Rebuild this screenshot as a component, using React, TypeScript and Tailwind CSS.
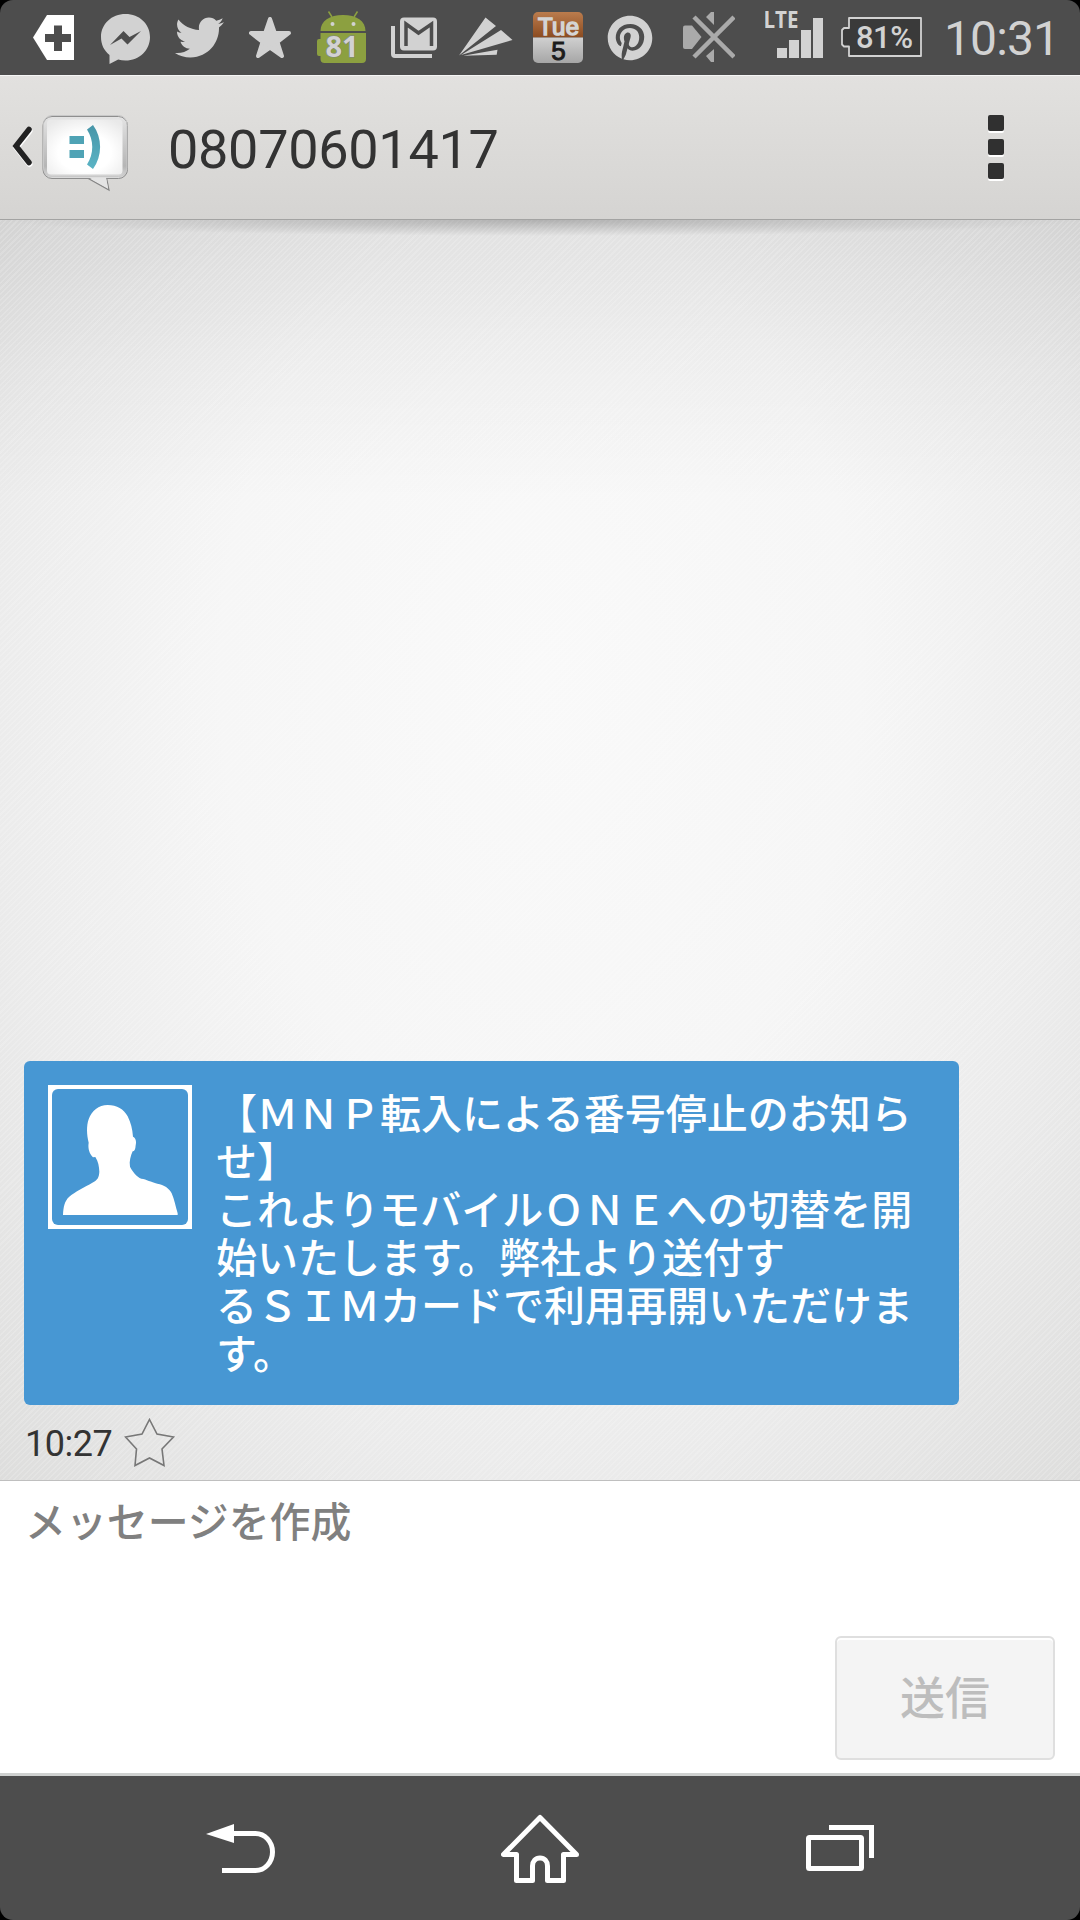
import { FaPinterest, FaTwitter } from "react-icons/fa";

const message = [
  "【ＭＮＰ転入による番号停止のお知ら",
  "せ】",
  "これよりモバイルＯＮＥへの切替を開",
  "始いたします。弊社より送付す",
  "るＳＩＭカードで利用再開いただけま",
  "す。",
];

export default function App() {
  return (
    <div className="flex h-[1920px] w-[1080px] flex-col overflow-hidden bg-black font-['Roboto','Noto_Sans_CJK_JP',sans-serif]">
      <StatusBar />
      <Header title="08070601417" />
      <Conversation />
      <Composer />
      <NavBar />
    </div>
  );
}

function StatusBar() {
  return (
    <div className="flex h-[75px] shrink-0 items-center rounded-t-[13px] bg-[#4d4d4d] text-[#d2d2d2]">
      {/* Back tag with plus */}
      <svg className="ml-[33px] shrink-0" width="41" height="75" viewBox="33 0 41 75">
        <path fill="#fff" d="M47 15h27v45H47L33 37.500z" />
        <path fill="#4d4d4d" d="M54 25.500h8V34h9v8h-9v9h-8v-9h-9v-8h9z" />
      </svg>

      {/* Messenger */}
      <svg className="ml-[27px] shrink-0" width="49" height="75" viewBox="101 0 49 75">
        <path
          fill="currentColor"
          d="M125.500 14c14 0 24.500 10 24.500 23s-10.500 23.500-24.500 23.500c-2.500 0-5-.3-7.300-1L109.500 64v-9c-5.500-4.500-8.500-10.500-8.500-18 0-13 10.500-23 24.500-23z"
        />
        <path fill="#4d4d4d" d="M110 45l13.500-14 6 6 11.500-6-13.500 13.500-6-6z" />
      </svg>

      <FaTwitter className="ml-[25px] h-[49px] w-[49px] shrink-0" />

      {/* Star */}
      <svg className="ml-[25px] shrink-0" width="42" height="75" viewBox="249 0 42 75">
        <path
          fill="currentColor"
          stroke="currentColor"
          strokeWidth="4"
          strokeLinejoin="round"
          d="M270 19l4.800 14H289l-11.500 9 4.500 14-12-8.500L258 56l4.500-14L251 33h14.200z"
        />
      </svg>

      {/* Android battery */}
      <svg className="ml-[26px] shrink-0" width="49" height="75" viewBox="317 0 49 75">
        <g fill="#8ca040">
          <path d="M320.500 31c0-10 9-16 22.500-16s22.500 6 22.500 16z" />
          <path d="M320.500 33h45.500v26a4 4 0 0 1-4 4h-37.500a4 4 0 0 1-4-4v-3h-1.500a2 2 0 0 1-2-2V41a2 2 0 0 1 2-2h1.500z" />
        </g>
        <path stroke="#8ca040" strokeWidth="1.500" d="M328.500 11.500l3.500 5.500M357.500 11.500l-3.500 5.500" />
        <circle cx="332.500" cy="24" r="2" fill="#d2d2d2" />
        <circle cx="353.500" cy="24" r="2" fill="#d2d2d2" />
        <text
          x="342"
          y="57"
          textAnchor="middle"
          className="fill-[#d2d2d2] stroke-[#7d8088] stroke-1 font-['Open_Sans',sans-serif] text-[29px] font-bold [paint-order:stroke]"
        >
          81
        </text>
      </svg>

      {/* Mail */}
      <svg className="ml-[25px] shrink-0" width="46" height="75" viewBox="391 0 46 75">
        <rect x="400" y="17.500" width="37" height="33" rx="4" fill="currentColor" />
        <path fill="none" stroke="#4d4d4d" strokeWidth="3.500" d="M406 46V24l12.500 9 13-9v22" />
        <path fill="currentColor" d="M391 26h4v28h37v4h-37a4 4 0 0 1-4-4z" />
      </svg>

      {/* Paper plane */}
      <svg className="ml-[22px] shrink-0" width="54" height="75" viewBox="459 0 54 75">
        <path fill="currentColor" d="M459 55.500L485.500 17.500 496 26zM461 55L501 30l11.500 10zM463 55.800l34.500-6-.8 5z" />
      </svg>

      {/* Calendar */}
      <svg className="ml-[20px] shrink-0" width="50" height="75" viewBox="533 0 50 75">
        <defs>
          <linearGradient id="calTop" x1="0" y1="0" x2="0" y2="1">
            <stop offset="0" stopColor="#bb7c4d" />
            <stop offset="1" stopColor="#8b4b20" />
          </linearGradient>
          <linearGradient id="calBottom" x1="0" y1="0" x2="0" y2="1">
            <stop offset="0" stopColor="#d0d0d0" />
            <stop offset="1" stopColor="#a6a6a6" />
          </linearGradient>
        </defs>
        <path fill="url(#calTop)" d="M533 37.500V17a5 5 0 0 1 5-5h40a5 5 0 0 1 5 5v20.500z" />
        <path fill="url(#calBottom)" d="M533 37.500h50V58a5 5 0 0 1-5 5h-40a5 5 0 0 1-5-5z" />
        <text
          x="558.500"
          y="35"
          textAnchor="middle"
          textLength="41"
          className="fill-[#d4d4d4] stroke-[#d4d4d4] stroke-[1.5px] font-['Liberation_Sans',sans-serif] text-[24px]"
        >
          Tue
        </text>
        <text
          x="558.500"
          y="59.500"
          textAnchor="middle"
          className="fill-[#1c1c1c] stroke-[#1c1c1c] stroke-1 font-['Liberation_Sans',sans-serif] text-[26px]"
        >
          5
        </text>
      </svg>

      <FaPinterest className="ml-[24px] h-[46px] w-[46px] shrink-0" />

      {/* Muted */}
      <svg className="ml-[30px] shrink-0" width="52" height="75" viewBox="683 0 52 75">
        <g fill="#aaa">
          <path d="M683 27.500a2 2 0 0 1 2-2h7L701.500 37 692 49h-7a2 2 0 0 1-2-2z" />
          <path d="M706 17l5-5h3v13zM706 56l5 6h3V49z" />
        </g>
        <path stroke="#aaa" strokeWidth="4.500" d="M694 17l40 40M734 17l-40 40" />
      </svg>

      {/* Signal */}
      <svg className="ml-[30px] shrink-0" width="58" height="75" viewBox="765 0 58 75">
        <text
          x="763.500"
          y="28"
          textLength="35"
          lengthAdjust="spacingAndGlyphs"
          className="fill-[#d2d2d2] font-['Open_Sans',sans-serif] text-[22.5px] font-bold"
        >
          LTE
        </text>
        <path fill="currentColor" d="M777 48h10v10h-10zM789 40h10v18h-10zM801 30h10v28h-10zM813 18h10v40h-10z" />
      </svg>

      {/* Battery */}
      <svg className="ml-[18px] shrink-0" width="81" height="75" viewBox="841 0 81 75">
        <path
          fill="#3a3a3a"
          stroke="#d2d2d2"
          strokeWidth="1.800"
          strokeLinejoin="round"
          d="M849 18h72v38h-72v-9.500h-5l-2-2V30l2-2h5z"
        />
        <text x="856" y="48" textLength="57" className="fill-[#d2d2d2] text-[31px] font-medium">
          81%
        </text>
      </svg>

      <span className="mt-[3px] ml-[22px] text-[48px] leading-none tracking-[-0.9px]">10:31</span>
    </div>
  );
}

function Header({ title }: { title: string }) {
  return (
    <header className="flex h-[145px] shrink-0 items-center border-t border-b border-t-[#f5f5f5] border-b-[#a3a3a2] bg-linear-to-b from-[#e2e1df] to-[#d5d4d2]">
      <svg className="ml-[10px] shrink-0" width="120" height="143" viewBox="10 76 120 143">
        <defs>
          <linearGradient id="bubbleEdge" x1="0" y1="0" x2="0" y2="1">
            <stop offset="0" stopColor="#e4e4e4" />
            <stop offset="0.800" stopColor="#b5b5b5" />
            <stop offset="1" stopColor="#dcdcdc" />
          </linearGradient>
          <radialGradient id="bubbleFace" cx="0.5" cy="0.600" r="0.700">
            <stop offset="0.500" stopColor="#fff" />
            <stop offset="1" stopColor="#e9e9e9" />
          </radialGradient>
          <linearGradient id="smile" x1="0" y1="0" x2="0" y2="1">
            <stop offset="0" stopColor="#4795a8" />
            <stop offset="1" stopColor="#5bb4c5" />
          </linearGradient>
        </defs>
        <path fill="none" stroke="#fff" strokeWidth="6" strokeLinecap="round" d="M29.500 131L16.500 147.500 29.500 164" />
        <path fill="none" stroke="#222" strokeWidth="5.500" strokeLinecap="round" d="M29 129.500L16 146 29 162.500" />
        <path fill="#e6e6e6" stroke="#858585" strokeWidth="1.200" d="M86.500 177.500l22.500 12.500-2.500-12.500z" />
        <rect x="43" y="116.500" width="84.500" height="62" rx="9" fill="url(#bubbleEdge)" stroke="#8e8e8e" />
        <rect x="43.500" y="115.500" width="83.500" height="61" rx="8.500" fill="none" stroke="#c8c8c8" />
        <rect x="47" y="119.500" width="75.500" height="55" rx="4" fill="url(#bubbleFace)" />
        <path fill="#e4e4e4" d="M89 177.500h17l2 11z" />
        <path fill="#4fa3b5" d="M69.500 136h14.500v8H69.500zM69.500 150h14.500v8H69.500z" />
        <path fill="url(#smile)" d="M87 129.500l6-4.500c9.500 13 9.500 31 0 44l-6-4.500c7-11 7-24 0-35z" />
      </svg>
      <h1 className="mt-1 ml-[38px] flex-1 text-[54px] leading-none tracking-[-0.3px] text-[#333]">{title}</h1>
      <div className="mr-[76px] mb-[2px] flex flex-col gap-2">
        <span className="size-4 rounded-[2px] bg-[#303030] shadow-[0_2px_0_#fff]" />
        <span className="size-4 rounded-[2px] bg-[#303030] shadow-[0_2px_0_#fff]" />
        <span className="size-4 rounded-[2px] bg-[#303030] shadow-[0_2px_0_#fff]" />
      </div>
    </header>
  );
}

function Conversation() {
  return (
    <main className="relative flex flex-1 flex-col justify-end bg-[repeating-linear-gradient(135deg,rgba(255,255,255,0.16)_0_1.5px,transparent_1.5px_4px),linear-gradient(to_bottom,rgba(0,0,0,0.085)_0,rgba(0,0,0,0.03)_150px,transparent_280px),radial-gradient(ellipse_800px_1150px_at_50%_36%,#f9f9f9_0%,#f6f6f6_40%,#ebebeb_70%,#dcdcdb_100%)] px-6">
      <div className="absolute inset-x-0 top-0 h-4 bg-[radial-gradient(ellipse_50%_100%_at_50%_0%,rgba(0,0,0,0.22),transparent)]" />
      <section className="flex h-[344px] w-[935px] gap-6 rounded-[6px] bg-[#4797d3] p-6">
        <Avatar />
        <p className="mt-1.5 text-[41px] leading-[48px] font-medium whitespace-nowrap text-white">
          {message.map((line) => (
            <span key={line} className="block">
              {line}
            </span>
          ))}
        </p>
      </section>
      <div className="flex h-[75px] items-center pl-px text-[36px] text-[#333]">
        <span className="mt-0.5 tracking-[-0.5px]">10:27</span>
        <svg className="ml-3" width="52" height="50" viewBox="124 1417 52 50">
          <path
            fill="none"
            stroke="#777"
            strokeWidth="1.600"
            d="M149.500 1418.500l7.500 14.500 16.500 3-11.500 12 2 16.500-14.500-7.500-14.500 7.500 1.500-16.500-11-12 16.500-3z"
          />
        </svg>
      </div>
    </main>
  );
}

function Avatar() {
  return (
    <div className="size-36 shrink-0 bg-white p-1">
      <svg className="rounded-[6px] bg-[#4797d3]" width="136" height="136" viewBox="156 148 408 408">
        <path
          fill="#fff"
          d="M189 526c1-24 5-42 18-54 18-16 48-30 70-43 16-8 20-16 21-33-1-16-3-30-12-44l-7 1c-10-10-16-26-13-44-6-24-7-50 0-70 9-26 30-43 57-43 28 0 48 12 60 34 10 20 14 38 16 61 8 3 11 14 8 26-1 12-3 18-9 18-6 14-11 30-8 46 8 16 20 30 34 36 16 2 28 10 48 15 20 3 36 14 43 29 8 18 12 40 18 60v5z"
        />
      </svg>
    </div>
  );
}

function Composer() {
  return (
    <form className="flex h-[296px] shrink-0 flex-col border-t border-b-[3px] border-t-[#bfbfbf] border-b-[#cfd1d0] bg-white">
      <span className="mt-[14px] ml-[25px] text-[40.9px] leading-[56px] font-medium text-[#808080]">
        メッセージを作成
      </span>
      <button
        type="button"
        className="mt-auto mr-[25px] mb-[13px] h-[124px] w-[220px] self-end rounded-[6px] border-2 border-[#dfdfdf] bg-[#f4f4f4] pt-1 text-[45px] font-medium text-[#bdbdbd] shadow-[inset_0_2px_0_#fff]"
      >
        送信
      </button>
    </form>
  );
}

function NavBar() {
  return (
    <nav className="flex h-36 shrink-0 items-center rounded-b-[13px] bg-[#4d4d4d] text-white">
      {/* Back */}
      <svg className="ml-[206px]" width="70" height="144" viewBox="206 1776 70 144">
        <path fill="currentColor" d="M206 1834l28-10v19z" />
        <path fill="none" stroke="currentColor" strokeWidth="5" d="M233 1833.500h22.500a17 18.500 0 0 1 0 37H222" />
      </svg>
      {/* Home */}
      <svg className="ml-[225px]" width="78" height="144" viewBox="501 1776 78 144">
        <path
          fill="none"
          stroke="currentColor"
          strokeWidth="5"
          strokeLinejoin="round"
          d="M540 1817.500L503.500 1854.500H516.500v26h16V1866c0-5 3-8 7.500-8s7.500 3 7.500 8v14.500h16v-26H576.500z"
        />
      </svg>
      {/* Recent apps */}
      <svg className="ml-[227px]" width="68" height="144" viewBox="806 1776 68 144">
        <rect x="808.500" y="1837.500" width="53" height="31" rx="1" fill="none" stroke="currentColor" strokeWidth="5" />
        <path fill="none" stroke="currentColor" strokeWidth="5" d="M829 1827.500h42.500V1858" />
      </svg>
    </nav>
  );
}
